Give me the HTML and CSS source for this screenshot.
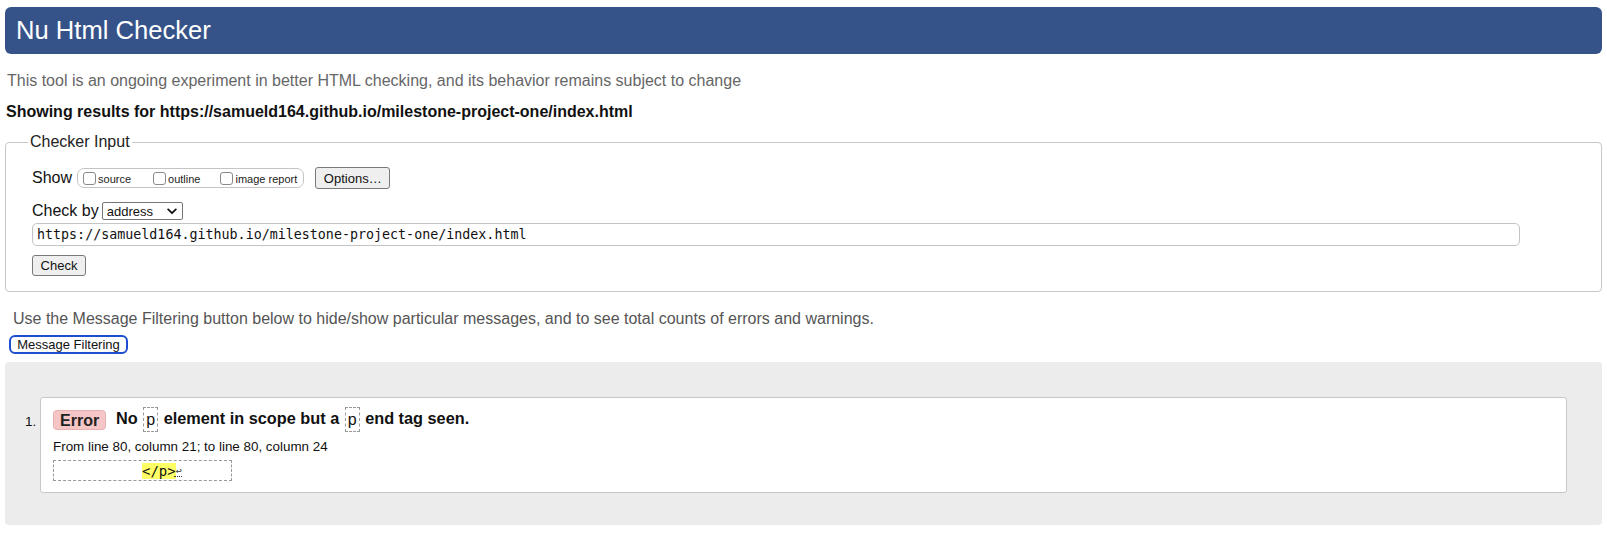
FILE: index.html
```html
<!DOCTYPE html>
<html lang="en">
<head>
<meta charset="utf-8">
<title>Showing results for https://samueld164.github.io/milestone-project-one/index.html - Nu Html Checker</title>
<link rel="stylesheet" href="styles.css">
</head>
<body>
<h1 class="title">Nu Html Checker</h1>
<p class="intro">This tool is an ongoing experiment in better HTML checking, and its behavior remains subject to change</p>
<p class="results-for">Showing results for https://samueld164.github.io/milestone-project-one/index.html</p>
<form class="checker-form">
  <fieldset class="checker">
    <legend class="checker-legend">Checker Input</legend>
    <div class="row row-show">
      <span class="row-label">Show</span>
      <span class="show-group">
        <label class="show-opt opt-source"><input type="checkbox" class="cb"><span>source</span></label>
        <label class="show-opt opt-outline"><input type="checkbox" class="cb"><span>outline</span></label>
        <label class="show-opt opt-image"><input type="checkbox" class="cb"><span>image report</span></label>
      </span>
      <button type="button" class="btn btn-options">Options…</button>
    </div>
    <div class="row row-checkby">
      <span class="row-label">Check by</span>
      <span class="select-wrap">
        <select class="select"><option>address</option></select>
        <svg class="chev" width="10" height="7" viewBox="0 0 10 7"><path d="M1.2 1.4 L5 5.2 L8.8 1.4" fill="none" stroke="#111" stroke-width="1.8" stroke-linecap="round" stroke-linejoin="round"/></svg>
      </span>
    </div>
    <div class="row row-url">
      <input class="url" type="url" value="https://samueld164.github.io/milestone-project-one/index.html">
    </div>
    <div class="row row-submit">
      <button type="button" class="btn btn-check">Check</button>
    </div>
  </fieldset>
</form>
<p class="filter-note">Use the Message Filtering button below to hide/show particular messages, and to see total counts of errors and warnings.</p>
<button type="button" class="btn btn-filter">Message Filtering</button>
<div class="results">
  <ol class="messages">
    <li class="msg">
      <p class="msg-head"><span class="badge">Error</span><span class="msg-text">No <code class="tok">p</code> element in scope but a <code class="tok">p</code> end tag seen.</span></p>
      <p class="location">From line 80, column 21; to line 80, column 24</p>
      <p class="extract-line"><code class="extract"><span class="indent"></span><mark class="hl">&lt;/p&gt;</mark><span class="lf">↩</span><span class="more"></span></code></p>
    </li>
  </ol>
</div>
</body>
</html>
```

FILE: styles.css
```css
html, body {
  margin: 0;
  padding: 0;
  background: #fff;
}
body {
  font-family: "Liberation Sans", Arial, Helvetica, sans-serif;
  font-size: 16px;
  color: #111;
  padding: 7px 5px 8px 5px;
}
.title {
  margin: 0;
  height: 47px;
  line-height: 47px;
  padding-left: 11px;
  background: #365389;
  color: #fff;
  font-size: 25.6px;
  font-weight: normal;
  border-radius: 6px;
}
.intro {
  margin: 18px 0 0 2px;
  line-height: 18px;
  color: #666;
}
.results-for {
  margin: 13px 0 0 1px;
  line-height: 18px;
  font-weight: bold;
  color: #111;
}
.checker-form {
  margin: 12px 0 0 0;
}
.checker {
  margin: 0;
  padding: 0 20px 15px 26px;
  border: 1px solid #c8c8c8;
  border-radius: 4px;
}
.checker-legend {
  margin-left: -4px;
  padding: 0 2px;
  font-size: 16px;
  line-height: 18px;
  color: #222;
}
.row {
  display: flex;
  align-items: center;
}
.row-label {
  font-size: 16px;
  color: #111;
}
.row-show {
  margin-top: 16px;
  height: 22px;
}
.show-group {
  display: inline-flex;
  align-items: center;
  height: 18px;
  margin-left: 5px;
  padding: 0 6px 0 5px;
  border: 1px solid #c4c4c4;
  border-radius: 7px;
}
.show-opt {
  display: inline-flex;
  align-items: center;
  font-size: 11px;
  color: #222;
}
.show-opt span {
  margin-left: 2px;
  padding-top: 2px;
}
.opt-source { margin-right: 22px; }
.opt-outline { margin-right: 20px; }
.cb {
  -webkit-appearance: none;
  appearance: none;
  width: 13px;
  height: 13px;
  margin: 0;
  border: 1px solid #8a8a8a;
  border-radius: 3px;
  background: #fff;
}
.btn {
  font-family: "Liberation Sans", Arial, Helvetica, sans-serif;
  font-size: 13px;
  color: #111;
  background: #efefef;
  border: 1px solid #7a7a7a;
  border-radius: 3px;
  margin: 0;
  padding: 0;
}
.btn-options {
  margin-left: 11px;
  width: 75px;
  height: 22px;
}
.row-checkby {
  margin-top: 12px;
  height: 20px;
}
.select-wrap {
  position: relative;
  display: inline-block;
  margin-left: 3px;
}
.select {
  -webkit-appearance: none;
  appearance: none;
  width: 81px;
  height: 18px;
  margin: 0;
  padding: 0 0 0 4px;
  font-family: "Liberation Sans", Arial, Helvetica, sans-serif;
  font-size: 13px;
  color: #111;
  background: #fff;
  border: 1px solid #767676;
  border-radius: 2px;
  display: block;
}
.chev {
  position: absolute;
  right: 6px;
  top: 6px;
  pointer-events: none;
}
.row-url {
  margin-top: 2px;
}
.url {
  width: 1488px;
  height: 23px;
  box-sizing: border-box;
  margin: 0;
  padding: 0 4px;
  font-family: "DejaVu Sans Mono", Menlo, monospace;
  font-size: 13.33px;
  color: #111;
  border: 1px solid #c4c4c4;
  border-radius: 5px;
  background: #fff;
}
.row-submit {
  margin-top: 9px;
}
.btn-check {
  width: 54px;
  height: 21px;
}
.filter-note {
  margin: 18px 0 0 8px;
  line-height: 18px;
  color: #555;
}
.btn-filter {
  display: block;
  margin: 7px 0 0 4px;
  width: 119px;
  height: 19px;
  background: #fff;
  border: 2px solid #1d4fcf;
  border-radius: 6px;
  font-size: 13px;
  line-height: 14px;
}
.results {
  margin-top: 8px;
  height: 163px;
  box-sizing: border-box;
  padding: 35px 35px 0 35px;
  background: #ececec;
  border-radius: 4px;
}
.messages {
  margin: 0;
  padding: 0;
  list-style: decimal;
  font-size: 13px;
}
.msg {
  background: #fff;
  border: 1px solid #c8c8c8;
  border-radius: 3px;
  padding: 9px 12px 10px 12px;
  height: 96px;
  box-sizing: border-box;
}
.msg::marker {
  font-size: 13.5px;
  color: #111;
}
.msg-head {
  margin: 0;
  display: flex;
  align-items: center;
  height: 25px;
  font-weight: bold;
  font-size: 16px;
}
.badge {
  display: inline-block;
  height: 20px;
  line-height: 19px;
  box-sizing: border-box;
  padding: 0 6px;
  width: 53px;
  text-align: center;
  background: #f6c6c6;
  border: 1px solid #e6b0b0;
  border-radius: 4px;
  color: #222;
  font-size: 16px;
}
.msg-text {
  margin-left: 10px;
  color: #111;
  font-size: 16.3px;
}
.tok {
  display: inline-block;
  font-family: "Liberation Sans", Arial, sans-serif;
  font-weight: normal;
  font-size: 16px;
  line-height: 23px;
  padding: 0 2px;
  border: 1px dashed #999;
  vertical-align: middle;
  margin: 0 1px;
}
.location {
  margin: 7px 0 0 0;
  font-size: 13.4px;
  line-height: 15px;
  color: #111;
}
.extract-line {
  margin: 6px 0 0 0;
}
.extract {
  display: flex;
  align-items: center;
  width: 179px;
  height: 21px;
  box-sizing: border-box;
  border: 1px dashed #999;
  font-family: "DejaVu Sans Mono", Menlo, monospace;
  font-size: 14px;
}
.indent {
  display: inline-block;
  width: 88px;
}
.hl {
  background: #ffff66;
  color: #111;
}
.lf {
  font-size: 10px;
  color: #333;
}
.more {
  display: inline-block;
  width: 8px;
  margin-left: -8px;
  margin-top: 12px;
  border-bottom: 1px dotted #333;
}
```
